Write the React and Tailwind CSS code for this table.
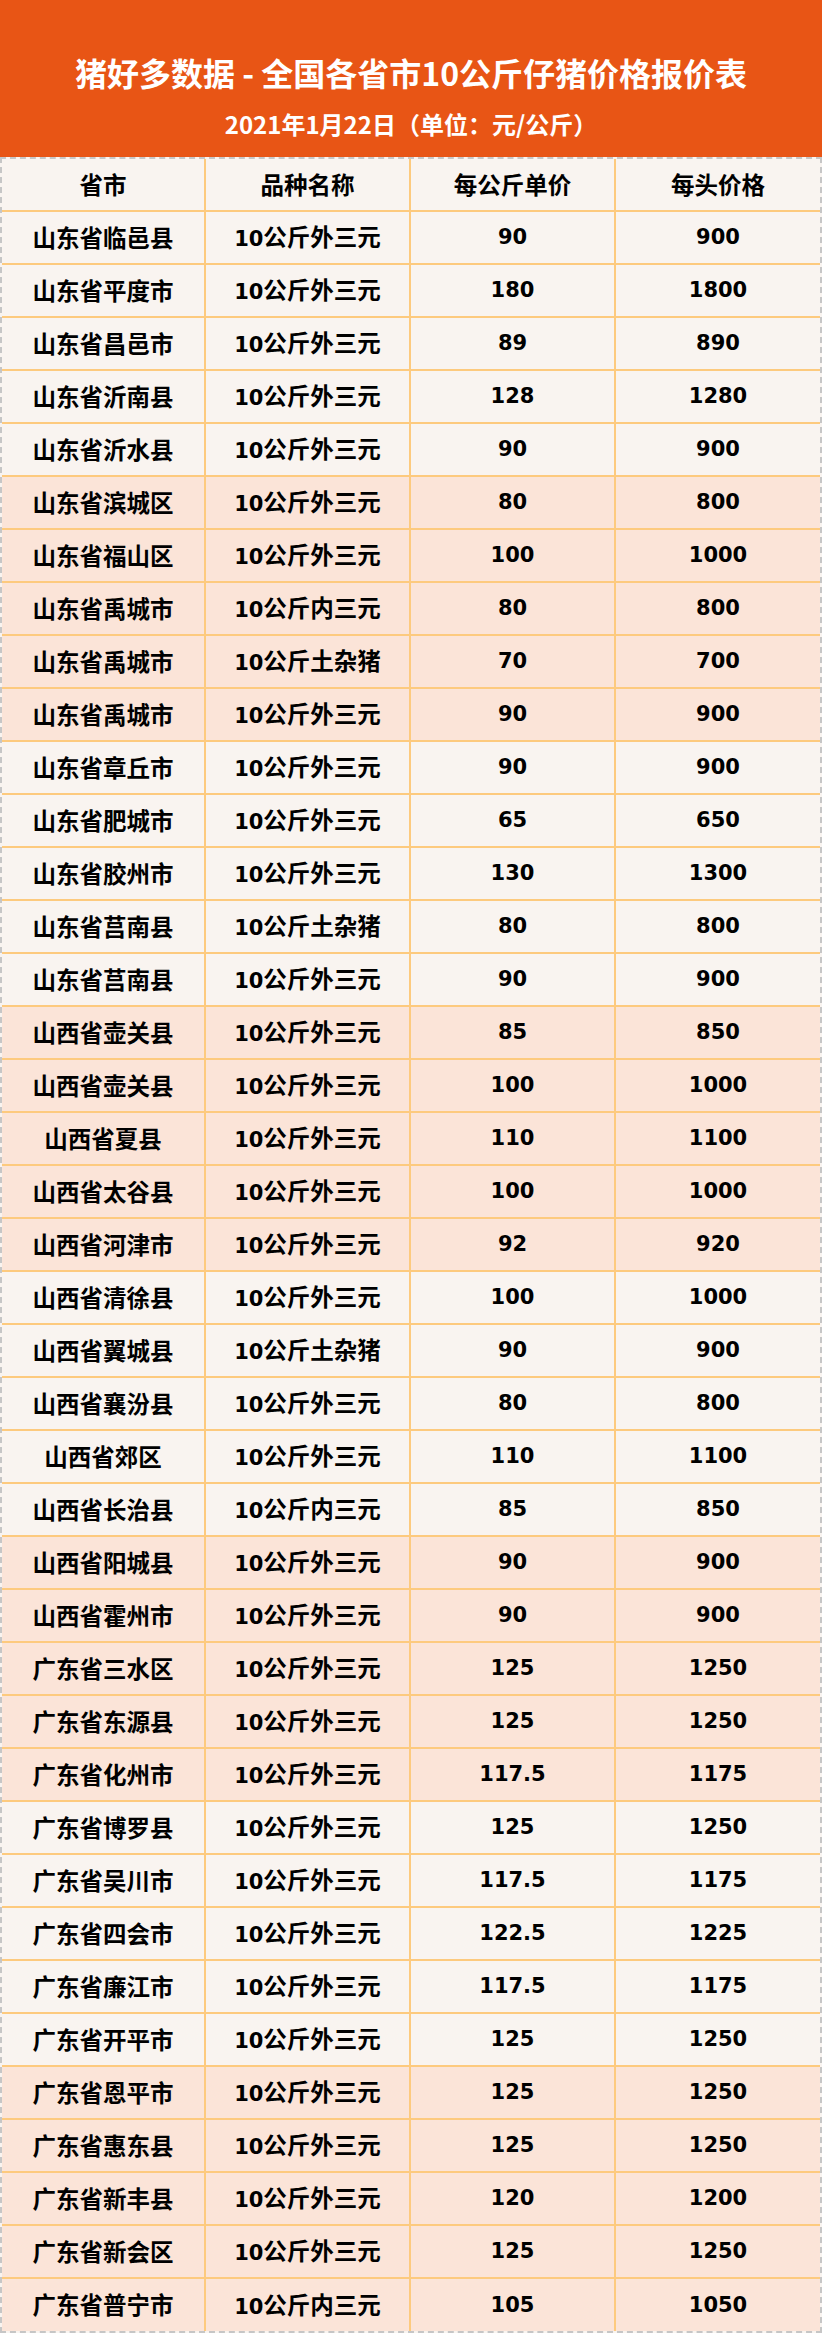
import React from "react";

const rows = [
  ["山东省临邑县", "10公斤外三元", "90", "900"],
  ["山东省平度市", "10公斤外三元", "180", "1800"],
  ["山东省昌邑市", "10公斤外三元", "89", "890"],
  ["山东省沂南县", "10公斤外三元", "128", "1280"],
  ["山东省沂水县", "10公斤外三元", "90", "900"],
  ["山东省滨城区", "10公斤外三元", "80", "800"],
  ["山东省福山区", "10公斤外三元", "100", "1000"],
  ["山东省禹城市", "10公斤内三元", "80", "800"],
  ["山东省禹城市", "10公斤土杂猪", "70", "700"],
  ["山东省禹城市", "10公斤外三元", "90", "900"],
  ["山东省章丘市", "10公斤外三元", "90", "900"],
  ["山东省肥城市", "10公斤外三元", "65", "650"],
  ["山东省胶州市", "10公斤外三元", "130", "1300"],
  ["山东省莒南县", "10公斤土杂猪", "80", "800"],
  ["山东省莒南县", "10公斤外三元", "90", "900"],
  ["山西省壶关县", "10公斤外三元", "85", "850"],
  ["山西省壶关县", "10公斤外三元", "100", "1000"],
  ["山西省夏县", "10公斤外三元", "110", "1100"],
  ["山西省太谷县", "10公斤外三元", "100", "1000"],
  ["山西省河津市", "10公斤外三元", "92", "920"],
  ["山西省清徐县", "10公斤外三元", "100", "1000"],
  ["山西省翼城县", "10公斤土杂猪", "90", "900"],
  ["山西省襄汾县", "10公斤外三元", "80", "800"],
  ["山西省郊区", "10公斤外三元", "110", "1100"],
  ["山西省长治县", "10公斤内三元", "85", "850"],
  ["山西省阳城县", "10公斤外三元", "90", "900"],
  ["山西省霍州市", "10公斤外三元", "90", "900"],
  ["广东省三水区", "10公斤外三元", "125", "1250"],
  ["广东省东源县", "10公斤外三元", "125", "1250"],
  ["广东省化州市", "10公斤外三元", "117.5", "1175"],
  ["广东省博罗县", "10公斤外三元", "125", "1250"],
  ["广东省吴川市", "10公斤外三元", "117.5", "1175"],
  ["广东省四会市", "10公斤外三元", "122.5", "1225"],
  ["广东省廉江市", "10公斤外三元", "117.5", "1175"],
  ["广东省开平市", "10公斤外三元", "125", "1250"],
  ["广东省恩平市", "10公斤外三元", "125", "1250"],
  ["广东省惠东县", "10公斤外三元", "125", "1250"],
  ["广东省新丰县", "10公斤外三元", "120", "1200"],
  ["广东省新会区", "10公斤外三元", "125", "1250"],
  ["广东省普宁市", "10公斤内三元", "105", "1050"],
];

function Txt({ s }) {
  const parts = s.split(/(\d+(?:\.\d+)?)/).filter((p) => p !== "");
  return (
    <span className="whitespace-nowrap">
      {parts.map((p, i) =>
        /^\d/.test(p) ? (
          <span key={i} className="font-['DejaVu_Sans',sans-serif] text-[21px] font-bold">
            {p}
          </span>
        ) : (
          <span key={i} className="font-['Noto_Sans_CJK_SC',sans-serif] text-[23.5px] font-bold">
            {p}
          </span>
        )
      )}
    </span>
  );
}

function Row({ cells, bg, last }) {
  const h = last ? "h-[52px]" : "h-[53px] border-b-2 border-[#fdca7e]";
  return (
    <div className={`flex ${h} ${bg}`}>
      <div className="flex w-[204px] shrink-0 items-center justify-center border-r-2 border-[#fdca7e]">
        <Txt s={cells[0]} />
      </div>
      <div className="flex w-[205px] shrink-0 items-center justify-center border-r-2 border-[#fdca7e]">
        <Txt s={cells[1]} />
      </div>
      <div className="flex w-[205px] shrink-0 items-center justify-center border-r-2 border-[#fdca7e]">
        <Txt s={cells[2]} />
      </div>
      <div className="flex flex-1 items-center justify-center">
        <Txt s={cells[3]} />
      </div>
    </div>
  );
}

export default function App() {
  return (
    <div className="w-[822px] bg-white text-black leading-none">
      <div className="flex h-[157px] flex-col items-center bg-[#e85515] text-white font-['Noto_Sans_CJK_SC',sans-serif] font-bold">
        <div className="mt-[52px] text-[32px] leading-[40px] whitespace-nowrap">
          猪好多数据 - 全国各省市10公斤仔猪价格报价表
        </div>
        <div className="mt-[16px] text-[24px] leading-[32px] whitespace-nowrap">
          2021年1月22日（单位：元/公斤）
        </div>
      </div>
      <div className="border-2 border-dashed border-[#c6c6c6] bg-[#f9f4f0]">
        <Row cells={["省市", "品种名称", "每公斤单价", "每头价格"]} bg="bg-[#f9f4f0]" />
        {rows.map((r, i) => {
          const pink = Math.floor(i / 5) % 2 === 1;
          return (
            <Row
              key={i}
              cells={r}
              bg={pink ? "bg-[#fbe4d8]" : "bg-[#f9f4f0]"}
              last={i === rows.length - 1}
            />
          );
        })}
      </div>
    </div>
  );
}
